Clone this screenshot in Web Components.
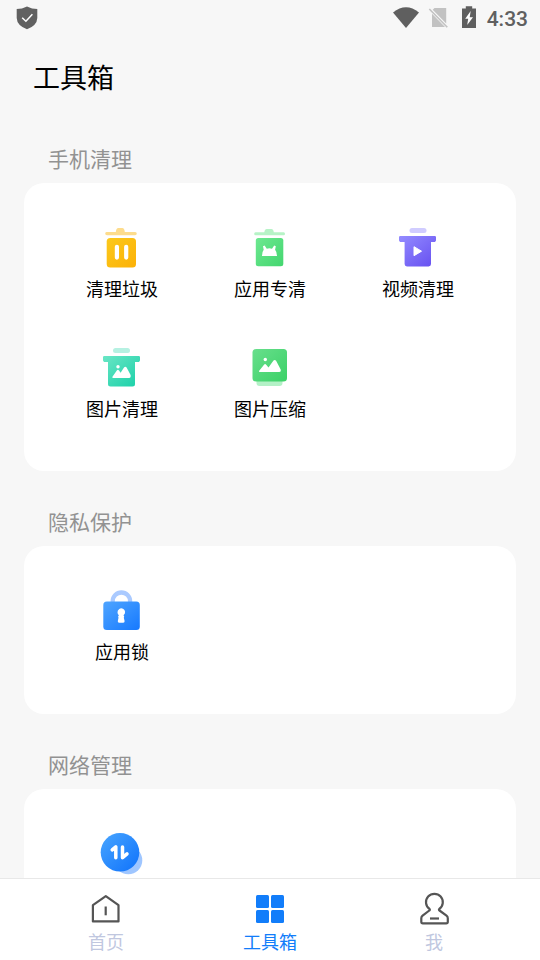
<!DOCTYPE html>
<html lang="zh-CN">
<head>
<meta charset="utf-8">
<title>工具箱</title>
<style>
html,body{margin:0;height:100%;overflow:hidden}
body{font-family:Roboto,"Noto Sans CJK SC",sans-serif;background:#f7f7f7;color:#000}
</style>
</head>
<body>
<toolbox-app></toolbox-app>
<script>
const define = (name, html) => {
  const t = document.createElement('template');
  t.innerHTML = html;
  customElements.define(name, class extends HTMLElement {
    constructor() {
      super();
      this.attachShadow({mode: 'open'}).append(t.content.cloneNode(true));
    }
  });
};

const grad = (id, a, b) => `<defs><linearGradient id="${id}" x1="0" y1="0" x2="1" y2="1"><stop stop-color="${a}"/><stop offset="1" stop-color="${b}"/></linearGradient></defs>`;
const ICONS = {
  // 48x48 tool icons
  trash: [48, grad('g', '#fbc91c', '#fcb107') + `<path d="M8.500 8h9.300q.4-4 2.500-4h4q2.100 0 2.500 4h10.300q1.700 0 1.700 1.600t-1.700 1.600H9Q7.200 11.200 7.200 9.600T8.500 8z" fill="#fddc8c"/><rect x="8.700" y="14" width="29.300" height="29.500" rx="3.500" fill="url(#g)"/><path d="M18.900 22.800v10.800M28.200 22.800v10.800" stroke="#fff" stroke-width="4.200" stroke-linecap="round"/>`],
  app: [48, grad('g', '#6de890', '#43d66f') + `<path d="M9.500 8.200h8.800q.5-3.200 2.500-3.200h4.500q2 0 2.500 3.200h9.900q1.300 0 1.300 1.500t-1.300 1.500H9.500q-1.300 0-1.300-1.500t1.300-1.500z" fill="#b6f3c6"/><rect x="9.800" y="14" width="27.500" height="28.300" rx="2.500" fill="url(#g)"/><path d="M16 32q.1-4.600 1.700-6.300L17 22.300l1.600-.8 2.200 3.200q2.600-.7 5.200 0l2.200-3.200 1.600.8-.7 3.400q1.700 1.700 1.900 6.300z" fill="#fff"/>`],
  video: [48, grad('g', '#948cff', '#654ef0') + `<rect x="15.500" y="4" width="17" height="5" rx="2.500" fill="#d0ccff"/><path d="M6.200 12h34.600q1.200 0 1.200 1.200v3.300L41 18h-4v22q0 2.400-2.400 2.400H13q-2.400 0-2.400-2.400V18H6L5 16.500V13.200q0-1.200 1.200-1.200z" fill="url(#g)"/><path d="M20 22.700l7.500 4.500-7.500 4.500z" fill="#fff" stroke="#fff" stroke-width="1" stroke-linejoin="round"/>`],
  image: [48, grad('g', '#6ae6c5', '#19d0a8') + `<rect x="15" y="4" width="17" height="5" rx="2.500" fill="#b6f1e2"/><path d="M6.200 12h34.600q1.200 0 1.200 1.200v3.300L41 18h-4v22q0 2.500-2.500 2.500H12.500Q10 42.500 10 40V18H6L5 16.500V13.200Q5 12 6.200 12z" fill="url(#g)"/><path d="M14.300 33l4.500-6.500q1.100-1.300 2.200 0l1.600 2.300 3.400-5.300q1.300-1.700 2.600 0l4 7.500q.5 3-1.500 3H15.500q-1.500 0-1.200-1z" fill="#fff"/><circle cx="20" cy="22.800" r="1.700" fill="#fff"/>`],
  compress: [48, grad('g', '#68df8c', '#3bd167') + `<path d="M10.500 34h26v5q0 3-3 3h-20q-3 0-3-3z" fill="#b3f1c6"/><rect x="6.500" y="5" width="34.500" height="32.500" rx="3.500" fill="url(#g)"/><path d="M13 27l5-6.300q1.100-1.200 2.200 0l2.300 2.700 4.800-6.600q1.400-1.700 2.800 0l4.600 8.700q.5 2.500-1.500 2.500H14q-1.500 0-1-1z" fill="#fff"/><circle cx="19.300" cy="15.500" r="1.700" fill="#fff"/>`],
  lock: [48, grad('g', '#4fa5ff', '#1679ff') + `<path d="M14.700 18v-3.800a8.700 8.700 0 0 1 17.400 0V18" fill="none" stroke="#aacaff" stroke-width="4.300"/><rect x="5.300" y="14.500" width="36.500" height="28.500" rx="3.500" fill="url(#g)"/><path d="M19.500 25.200a3.800 3.800 0 1 1 6 3l.7 1.200-.4 1.300.8 3.300q.2 1.700-1.400 1.700h-4q-1.700 0-1.400-1.700l.7-3.300-.4-1.300.8-1.200a3.800 3.800 0 0 1-1.400-3z" fill="#fff"/>`],
  network: [48, grad('g', '#48a5ff', '#0f72fb') + `<circle cx="30.300" cy="30.300" r="14" fill="#9fc6ff"/><circle cx="22" cy="22.300" r="19.300" fill="url(#g)"/><path d="M14.200 19.900l3.600-3v10.900M24.500 16.900v10.900l4.500-3.900" fill="none" stroke="#fff" stroke-width="3.500" stroke-linecap="round" stroke-linejoin="round"/>`],
  // 36x36 navigation icons
  home: [36, `<path d="M4.900 14.200L17.800 5.100l12.700 9.100v16.200H4.900z" fill="none" stroke="#555" stroke-width="2.200" stroke-linejoin="round"/><path d="M17.700 15.500v8.800" stroke="#555" stroke-width="2.200"/>`],
  grid: [36, `<g fill="#127dfa"><rect x="4" y="4" width="13" height="13" rx="1.500"/><rect x="19" y="4" width="13" height="13" rx="1.500"/><rect x="4" y="19" width="13" height="13" rx="1.500"/><rect x="19" y="19" width="13" height="13" rx="1.500"/></g>`],
  user: [36, `<path d="M13.500 18a8.400 8.400 0 1 1 9.800 0q-.8.800.2 1.500l7 5.200q1.300 1 1.300 2.600v3.400q0 1.600-1.600 1.600H6.900q-1.600 0-1.600-1.600v-3.400q0-1.600 1.300-2.600l6.700-5.200q1-.7.200-1.500z" fill="none" stroke="#555" stroke-width="2.200" stroke-linejoin="round"/><path d="M14 27.500h9" stroke="#555" stroke-width="2.200"/>`],
  shield: [24, `<path d="M12 .4q5 2.600 10.300 2.600v9Q22 19.500 12 23.300 2 19.500 1.700 12V3Q7 3 12 .4z" fill="#616161"/><path d="M7.200 11.700l3.700 3.500 6.500-7" fill="none" stroke="#fff" stroke-width="1.500"/>`],
  wifi: [26, `<path d="M0 6.500q13-10.500 26 0L13 22z" fill="#5f5f5f"/>`],
  nosim: [24, `<path d="M8.500 2H20.200v15.500L6.700 3.800zM6 7.800L19 21H6z" fill="#c2c2c2"/><path d="M3.300 3l18 18.300" stroke="#c2c2c2" stroke-width="1.600"/>`],
  battery: [24, `<path d="M5 2.500h3.800V0.200h6.400v2.300H19V22H5z" fill="#5f5f5f"/><path d="M13.700 5L8.200 12.700h3L10.200 19l5.800-7.800h-3.300z" fill="#fff"/>`]
};

customElements.define('app-icon', class extends HTMLElement {
  connectedCallback() {
    const [size, body] = ICONS[this.getAttribute('name')];
    const root = this.shadowRoot || this.attachShadow({mode: 'open'});
    root.innerHTML = `<style>:host{display:block;flex:none;width:${size}px;height:${size}px}svg{display:block}</style><svg width="${size}" height="${size}" viewBox="0 0 ${size} ${size}">${body}</svg>`;
  }
});

define('status-bar', `<style>
:host{display:flex;align-items:flex-start;height:36px;padding:6px 12px 0 15px;box-sizing:border-box}
.right{display:flex;margin-left:auto}
.sim{margin-left:7px}.bat{margin-left:7px}
time{font:500 21px/24px Roboto,sans-serif;color:#606060;margin-left:6px;transform:translateY(1px)}
</style><app-icon name="shield"></app-icon><div class="right"><app-icon name="wifi"></app-icon><app-icon class="sim" name="nosim"></app-icon><app-icon class="bat" name="battery"></app-icon><time>4:33</time></div>`);

define('tool-item', `<style>
:host{display:flex;flex-direction:column;align-items:center;height:120px;padding-top:17px;box-sizing:border-box;font-size:18px;line-height:24px}
.label{margin-top:6px}
</style><slot name="icon"></slot><div class="label"><slot></slot></div>`);

define('tool-section', `<style>
:host{display:block;padding:0 24px}
h2{margin:0;padding:0 24px;height:75px;box-sizing:border-box;padding-top:36px;font-weight:400;font-size:21px;line-height:32px;color:#929292}
.card{display:grid;grid-template-columns:repeat(3,1fr);padding:24px;background:#fff;border-radius:20px}
</style><h2><slot name="title"></slot></h2><div class="card"><slot></slot></div>`);

define('nav-item', `<style>
:host{display:flex;flex-direction:column;align-items:center;flex:1;padding-top:12px;font-size:18px;line-height:24px;color:#c0c7df}
:host([active]){color:#127dfa}
.label{margin-top:4px}
</style><slot name="icon"></slot><div class="label"><slot></slot></div>`);

define('bottom-nav', `<style>
:host{display:flex;height:82px;box-sizing:border-box;padding:0 24px;border-top:1px solid #e8e8e8;background:#fff;flex:none}
</style><slot></slot>`);

define('toolbox-app', `<style>
:host{display:flex;flex-direction:column;height:100vh;overflow:hidden;background:#f7f7f7}
status-bar{flex:none}
h1{margin:0;padding:23px 33px 0;height:72px;box-sizing:border-box;font-weight:400;font-size:27px;line-height:40px;flex:none}
main{flex:1;min-height:0;overflow:hidden}
</style>
<status-bar></status-bar>
<h1>工具箱</h1>
<main>
<tool-section><span slot="title">手机清理</span>
<tool-item><app-icon slot="icon" name="trash"></app-icon>清理垃圾</tool-item>
<tool-item><app-icon slot="icon" name="app"></app-icon>应用专清</tool-item>
<tool-item><app-icon slot="icon" name="video"></app-icon>视频清理</tool-item>
<tool-item><app-icon slot="icon" name="image"></app-icon>图片清理</tool-item>
<tool-item><app-icon slot="icon" name="compress"></app-icon>图片压缩</tool-item>
</tool-section>
<tool-section><span slot="title">隐私保护</span>
<tool-item><app-icon slot="icon" name="lock"></app-icon>应用锁</tool-item>
</tool-section>
<tool-section><span slot="title">网络管理</span>
<tool-item><app-icon slot="icon" name="network"></app-icon></tool-item>
</tool-section>
</main>
<bottom-nav>
<nav-item><app-icon slot="icon" name="home"></app-icon>首页</nav-item>
<nav-item active><app-icon slot="icon" name="grid"></app-icon>工具箱</nav-item>
<nav-item><app-icon slot="icon" name="user"></app-icon>我</nav-item>
</bottom-nav>`);
</script>
</body>
</html>
